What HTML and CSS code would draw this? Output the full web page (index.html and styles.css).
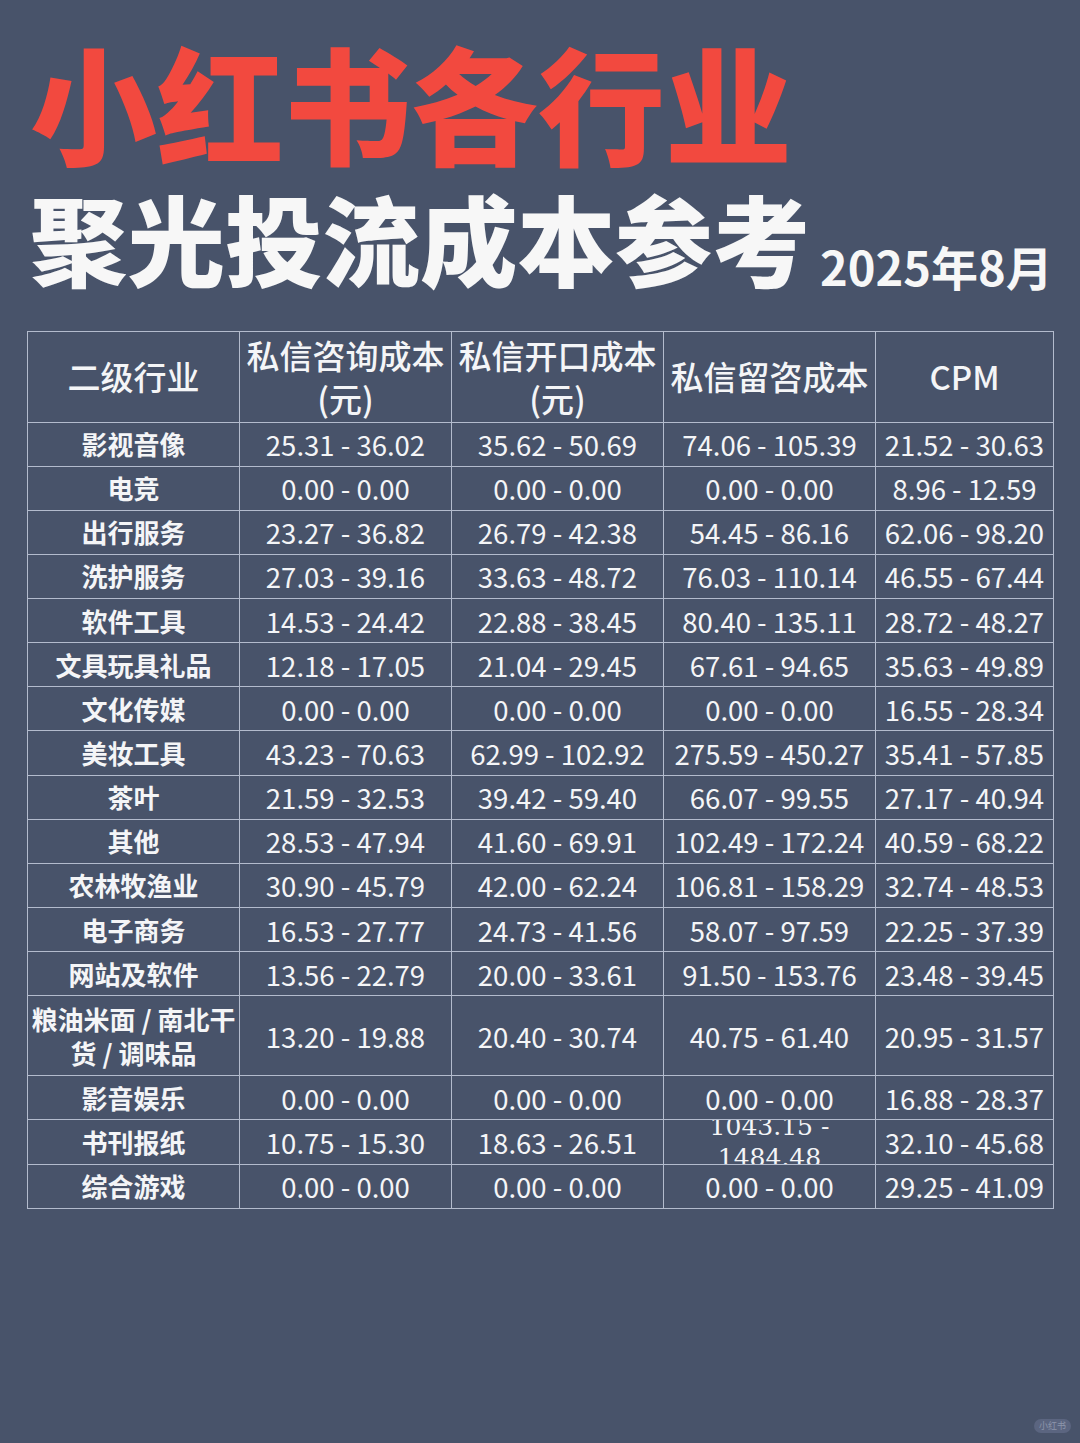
FILE: index.html
```html
<!DOCTYPE html>
<html lang="zh-CN">
<head>
<meta charset="utf-8">
<title>小红书各行业聚光投流成本参考</title>
<link rel="stylesheet" href="styles.css">
</head>
<body>
<div class="page">
  <header class="hero">
    <h1 class="title-red">小红书各行业</h1>
    <div class="title-row">
      <h2 class="title-white">聚光投流成本参考</h2>
      <span class="date">2025年8月</span>
    </div>
  </header>

  <div class="table">
    <div class="cell head">二级行业</div>
    <div class="cell head">私信咨询成本<br>(元)</div>
    <div class="cell head">私信开口成本<br>(元)</div>
    <div class="cell head">私信留咨成本</div>
    <div class="cell head">CPM</div>

    <div class="cell label">影视音像</div><div class="cell num">25.31 - 36.02</div><div class="cell num">35.62 - 50.69</div><div class="cell num">74.06 - 105.39</div><div class="cell num">21.52 - 30.63</div>
    <div class="cell label">电竞</div><div class="cell num">0.00 - 0.00</div><div class="cell num">0.00 - 0.00</div><div class="cell num">0.00 - 0.00</div><div class="cell num">8.96 - 12.59</div>
    <div class="cell label">出行服务</div><div class="cell num">23.27 - 36.82</div><div class="cell num">26.79 - 42.38</div><div class="cell num">54.45 - 86.16</div><div class="cell num">62.06 - 98.20</div>
    <div class="cell label">洗护服务</div><div class="cell num">27.03 - 39.16</div><div class="cell num">33.63 - 48.72</div><div class="cell num">76.03 - 110.14</div><div class="cell num">46.55 - 67.44</div>
    <div class="cell label">软件工具</div><div class="cell num">14.53 - 24.42</div><div class="cell num">22.88 - 38.45</div><div class="cell num">80.40 - 135.11</div><div class="cell num">28.72 - 48.27</div>
    <div class="cell label">文具玩具礼品</div><div class="cell num">12.18 - 17.05</div><div class="cell num">21.04 - 29.45</div><div class="cell num">67.61 - 94.65</div><div class="cell num">35.63 - 49.89</div>
    <div class="cell label">文化传媒</div><div class="cell num">0.00 - 0.00</div><div class="cell num">0.00 - 0.00</div><div class="cell num">0.00 - 0.00</div><div class="cell num">16.55 - 28.34</div>
    <div class="cell label">美妆工具</div><div class="cell num">43.23 - 70.63</div><div class="cell num">62.99 - 102.92</div><div class="cell num">275.59 - 450.27</div><div class="cell num">35.41 - 57.85</div>
    <div class="cell label">茶叶</div><div class="cell num">21.59 - 32.53</div><div class="cell num">39.42 - 59.40</div><div class="cell num">66.07 - 99.55</div><div class="cell num">27.17 - 40.94</div>
    <div class="cell label">其他</div><div class="cell num">28.53 - 47.94</div><div class="cell num">41.60 - 69.91</div><div class="cell num">102.49 - 172.24</div><div class="cell num">40.59 - 68.22</div>
    <div class="cell label">农林牧渔业</div><div class="cell num">30.90 - 45.79</div><div class="cell num">42.00 - 62.24</div><div class="cell num">106.81 - 158.29</div><div class="cell num">32.74 - 48.53</div>
    <div class="cell label">电子商务</div><div class="cell num">16.53 - 27.77</div><div class="cell num">24.73 - 41.56</div><div class="cell num">58.07 - 97.59</div><div class="cell num">22.25 - 37.39</div>
    <div class="cell label">网站及软件</div><div class="cell num">13.56 - 22.79</div><div class="cell num">20.00 - 33.61</div><div class="cell num">91.50 - 153.76</div><div class="cell num">23.48 - 39.45</div>
    <div class="cell label wrap">粮油米面 / 南北干货 / 调味品</div><div class="cell num">13.20 - 19.88</div><div class="cell num">20.40 - 30.74</div><div class="cell num">40.75 - 61.40</div><div class="cell num">20.95 - 31.57</div>
    <div class="cell label">影音娱乐</div><div class="cell num">0.00 - 0.00</div><div class="cell num">0.00 - 0.00</div><div class="cell num">0.00 - 0.00</div><div class="cell num">16.88 - 28.37</div>
    <div class="cell label">书刊报纸</div><div class="cell num">10.75 - 15.30</div><div class="cell num">18.63 - 26.51</div><div class="cell num overflow">1043.15 - 1484.48</div><div class="cell num">32.10 - 45.68</div>
    <div class="cell label">综合游戏</div><div class="cell num">0.00 - 0.00</div><div class="cell num">0.00 - 0.00</div><div class="cell num">0.00 - 0.00</div><div class="cell num">29.25 - 41.09</div>
  </div>

  <div class="watermark">小红书</div>
</div>
</body>
</html>
```

FILE: styles.css
```css
html, body {
  margin: 0;
  padding: 0;
}
body {
  background: #48536a;
  font-family: "Noto Sans CJK SC", "Noto Sans", sans-serif;
  color: #f4f5f7;
}
.page {
  position: relative;
  width: 1080px;
  height: 1443px;
  overflow: hidden;
}
.hero {
  padding: 38px 0 0 30px;
}
.title-red {
  margin: 0;
  font-size: 127px;
  line-height: 1;
  font-weight: 900;
  color: #f2493f;
  letter-spacing: 0;
}
.title-row {
  display: flex;
  align-items: flex-end;
  margin-top: 23px;
}
.title-white {
  margin: 0;
  font-size: 97.5px;
  line-height: 1;
  font-weight: 900;
  color: #f7f7f7;
  letter-spacing: 0;
}
.date {
  margin: 0 0 -3px 10px;
  font-size: 47px;
  line-height: 1;
  font-weight: 700;
  color: #f7f7f7;
}
.table {
  margin: 45px 0 0 27px;
  width: 1027px;
  box-sizing: border-box;
  display: grid;
  grid-template-columns: 211px 211px 211px 211px 177px;
  grid-template-rows: 90px repeat(13, 43.15px) 79px repeat(3, 43.15px);
  gap: 1px;
  padding: 1px;
  background: #b3bbcd;
}
.cell {
  background: #48536a;
  display: flex;
  align-items: center;
  justify-content: center;
  text-align: center;
  overflow: hidden;
  padding: 0 10px;
  min-width: 0;
}
.head {
  font-size: 33px;
  font-weight: 500;
  line-height: 43px;
  padding: 0 2px;
}
.label {
  font-size: 26px;
  font-weight: 700;
  line-height: 30px;
  padding: 0 2px;
}
.label.wrap {
  line-height: 34px;
}
.num {
  font-size: 27.5px;
  font-weight: 400;
  line-height: 30px;
  white-space: nowrap;
  padding: 0 2px;
}
.num.overflow {
  white-space: normal;
  font-family: "DejaVu Serif", serif;
  font-size: 25px;
  line-height: 31px;
  padding: 0 12px;
}
.watermark {
  position: absolute;
  right: 9px;
  bottom: 10px;
  padding: 1px 5px;
  border-radius: 8px;
  background: #5b6580;
  color: #8c95ab;
  font-size: 9px;
  line-height: 12px;
}
```
